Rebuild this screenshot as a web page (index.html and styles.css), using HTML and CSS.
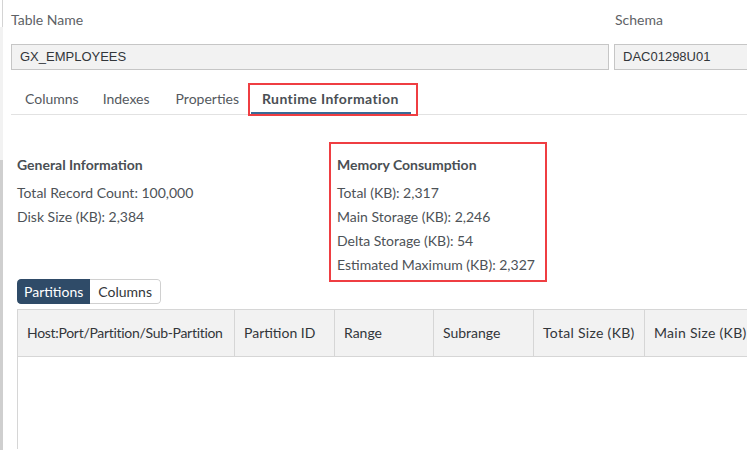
FILE: index.html
```html
<!DOCTYPE html>
<html>
<head>
<meta charset="utf-8">
<link rel="stylesheet" href="styles.css">
</head>
<body>
<div class="page">
  <div class="edge"><div class="edge-top"></div><div class="edge-mid"></div><div class="edge-bot"></div></div>
  <div class="main">
    <div class="fields">
      <div class="field">
        <div class="label">Table Name</div>
        <div class="input">GX_EMPLOYEES</div>
      </div>
      <div class="field">
        <div class="label">Schema</div>
        <div class="input">DAC01298U01</div>
      </div>
    </div>
    <div class="tabs">
      <div class="tab">Columns</div>
      <div class="tab">Indexes</div>
      <div class="tab props">Properties</div>
      <div class="tab active">Runtime Information</div>
    </div>
    <div class="content">
      <div class="info">
        <div class="group general">
          <div class="heading">General Information</div>
          <div class="row">Total Record Count: 100,000</div>
          <div class="row">Disk Size (KB): 2,384</div>
        </div>
        <div class="group memory">
          <div class="heading">Memory Consumption</div>
          <div class="row">Total (KB): 2,317</div>
          <div class="row">Main Storage (KB): 2,246</div>
          <div class="row">Delta Storage (KB): 54</div>
          <div class="row">Estimated Maximum (KB): 2,327</div>
        </div>
      </div>
      <div class="segmented">
        <div class="seg on">Partitions</div>
        <div class="seg">Columns</div>
      </div>
      <div class="table">
        <div class="thead">
          <div class="th c1">Host:Port/Partition/Sub-Partition</div>
          <div class="th c2">Partition ID</div>
          <div class="th c3">Range</div>
          <div class="th c4">Subrange</div>
          <div class="th c5">Total Size (KB)</div>
          <div class="th c6">Main Size (KB)</div>
        </div>
        <div class="tbody"></div>
      </div>
    </div>
  </div>
</div>
</body>
</html>
```

FILE: styles.css
```css
html, body {
  margin: 0;
  padding: 0;
  background: #ffffff;
}
body {
  width: 747px;
  height: 450px;
  overflow: hidden;
  font-family: Lato, "Liberation Sans", Arial, sans-serif;
  font-size: 14px;
  color: #32363a;
}
.page {
  display: flex;
  height: 450px;
  overflow: hidden;
}
.edge {
  width: 3px;
  flex: none;
  display: flex;
  flex-direction: column;
}
.edge-top {
  height: 27px;
  border-right: 1px solid #d4d4d4;
  width: 1px;
  margin-left: 1px;
}
.edge-mid {
  height: 133px;
  background: #f2f2f2;
}
.edge-bot {
  flex: 1;
  background: #cfcfcf;
}
.main {
  flex: 1;
  min-width: 0;
  padding-left: 8px;
  overflow: hidden;
}
.fields {
  display: grid;
  grid-template-columns: 598px 200px;
  column-gap: 5px;
}
.label {
  margin-top: 10px;
  height: 20px;
  line-height: 20px;
  color: #5e6266;
  font-size: 14px;
}
.field + .field .label {
  padding-left: 1px;
}
.input {
  margin-top: 14px;
  height: 24px;
  line-height: 24px;
  border: 1px solid #c6c6c6;
  background: #f2f2f2;
  padding-left: 8px;
  font-family: "Liberation Sans", Arial, sans-serif;
  font-size: 13px;
  color: #32363a;
}
.tabs {
  display: flex;
  margin-top: 14px;
  border-bottom: 1px solid #e2e2e2;
  padding-left: 2px;
}
.tab {
  height: 30px;
  line-height: 29px;
  padding: 0 12px;
  color: #54595e;
  font-size: 14px;
  position: relative;
}
.tab.props {
  padding-left: 14px;
}
.tab.active {
  font-weight: bold;
  color: #4a4f54;
  letter-spacing: 0.4px;
  border-bottom: 2px solid #3a6a96;
  height: 28px;
  padding-left: 11px;
}
.tab.active::after {
  content: "";
  position: absolute;
  left: -3px;
  right: -7px;
  top: -1px;
  bottom: -4px;
  border: 2px solid #ef3e42;
}
.content {
  padding-left: 6px;
}
.info {
  display: grid;
  grid-template-columns: 312px auto;
  justify-content: start;
  margin-top: 27px;
  margin-bottom: -3px;
}
.group .heading {
  font-weight: bold;
  color: #4a4f54;
  height: 24px;
  line-height: 24px;
  margin-bottom: 4px;
}
.group .row {
  height: 24px;
  line-height: 24px;
  color: #4d5257;
}
.general {
  padding-top: 11px;
}
.memory {
  border: 2px solid #ef3e42;
  padding: 9px 10px 3px 6px;
}
.segmented {
  display: flex;
  width: fit-content;
  height: 25px;
  border-radius: 4px;
  overflow: hidden;
  font-size: 14px;
}
.seg {
  line-height: 23px;
  padding: 0 8px;
  border: 1px solid #d0d0d0;
  border-left: none;
  background: #fff;
  color: #32363a;
}
.seg:last-child {
  border-radius: 0 4px 4px 0;
}
.seg.on {
  background: #2f4b68;
  border-color: #2f4b68;
  color: #ffffff;
  border-radius: 4px 0 0 4px;
  padding: 0 6px 0 7px;
}
.table {
  margin-top: 5px;
  border-left: 1px solid #d6d6d6;
  height: 140px;
  overflow: hidden;
}
.thead {
  display: flex;
  height: 46px;
  background: #f2f2f2;
  border-top: 1px solid #d6d6d6;
  border-bottom: 1px solid #d6d6d6;
  overflow: hidden;
}
.th {
  flex: none;
  line-height: 46px;
  padding-left: 9px;
  border-right: 1px solid #d6d6d6;
  color: #32363a;
  white-space: nowrap;
  box-sizing: border-box;
}
.c1 { width: 217px; letter-spacing: -0.3px; }
.c2 { width: 100px; }
.c3 { width: 99px; }
.c4 { width: 100px; }
.c5 { width: 111px; letter-spacing: 0.3px; }
.c6 { width: 120px; letter-spacing: 0.3px; }
```
